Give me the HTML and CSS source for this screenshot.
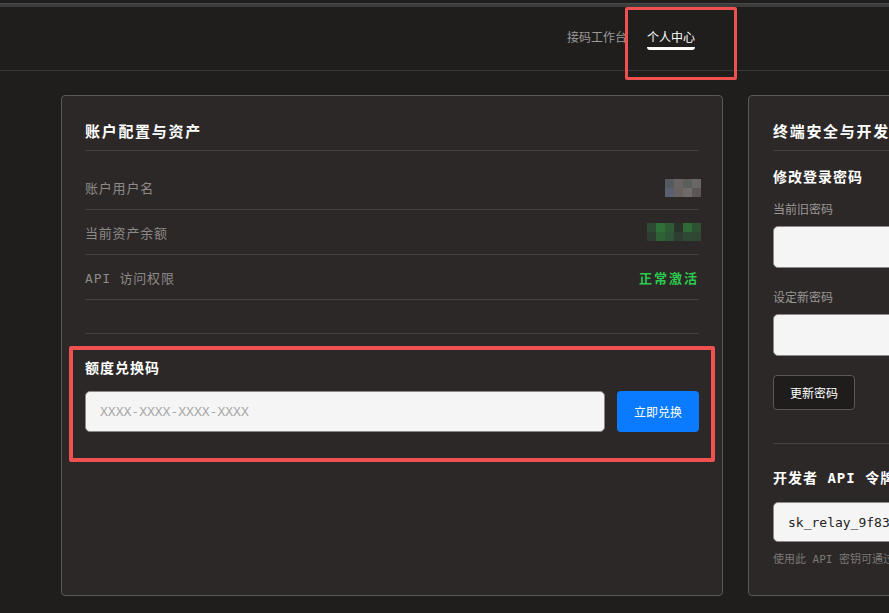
FILE: index.html
```html
<!DOCTYPE html>
<html lang="zh-CN">
<head>
<meta charset="utf-8">
<title>个人中心</title>
<link rel="stylesheet" href="styles.css">
</head>
<body>
<div class="topstrip"></div>
<header class="header">
  <nav class="nav">
    <a class="nav-item">接码工作台</a>
    <a class="nav-item active">个人中心</a>
  </nav>
</header>

<main class="grid">
  <section class="card">
    <h2 class="card-title">账户配置与资产</h2>
    <div class="rows">
      <div class="row">
        <span class="label">账户用户名</span>
        <span class="pix pix-4">
          <i style="background:#555a60"></i><i style="background:#6a6263"></i><i style="background:#5a5e5c"></i><i style="background:#6a6664"></i>
          <i style="background:#5a6070"></i><i style="background:#67615f"></i><i style="background:#6e6a68"></i><i style="background:#5e5654"></i>
        </span>
      </div>
      <div class="row">
        <span class="label">当前资产余额</span>
        <span class="pix pix-6">
          <i style="background:#2f4a33"></i><i style="background:#2e7038"></i><i style="background:#2f5c35"></i><i style="background:#2a322c"></i><i style="background:#2f6a37"></i><i style="background:#2e5034"></i>
          <i style="background:#2d3d30"></i><i style="background:#2e6236"></i><i style="background:#2e5535"></i><i style="background:#2d3e32"></i><i style="background:#2e4a35"></i><i style="background:#2e4833"></i>
        </span>
      </div>
      <div class="row">
        <span class="label">API 访问权限</span>
        <span class="status">正常激活</span>
      </div>
    </div>
    <hr class="sep sep-left">
    <div class="redeem">
      <h3 class="sub-title">额度兑换码</h3>
      <div class="redeem-form">
        <input class="field field-code" type="text" placeholder="XXXX-XXXX-XXXX-XXXX">
        <button class="btn-primary" type="button">立即兑换</button>
      </div>
    </div>
  </section>

  <section class="card">
    <h2 class="card-title">终端安全与开发</h2>
    <h3 class="sub-title sub-first">修改登录密码</h3>
    <label class="field-label">当前旧密码</label>
    <input class="field field-pass" type="password">
    <label class="field-label field-label-2">设定新密码</label>
    <input class="field field-pass" type="password">
    <button class="btn-dark" type="button">更新密码</button>
    <hr class="sep sep-right">
    <h3 class="sub-title">开发者 API 令牌</h3>
    <input class="field field-token" type="text" value="sk_relay_9f83a1c7e2b04d5f8a6e" readonly>
    <p class="help">使用此 API 密钥可通过接口调用接码服务，请妥善保管。</p>
  </section>
</main>

<div class="annot annot-nav"></div>
<div class="annot annot-redeem"></div>
</body>
</html>
```

FILE: styles.css
```css
html, body {
  margin: 0;
  padding: 0;
  overflow: hidden;
}

body {
  background: #1f1e1d;
  color: #eeeeee;
  font-family: "DejaVu Sans Mono", "Noto Sans CJK SC", monospace;
  height: 613px;
  position: relative;
}

.topstrip {
  height: 4px;
  margin-top: 3px;
  background: #3c3c3c;
  border-top: 1px solid #4a4a4a;
  box-sizing: border-box;
}

.header {
  height: 63px;
  border-bottom: 1px solid #3a3a3a;
  box-sizing: content-box;
  display: flex;
  justify-content: flex-end;
  padding-right: 194px;
}

.nav {
  display: flex;
  gap: 20px;
  padding-top: 22px;
}

.nav-item {
  font-family: "Noto Sans CJK SC", sans-serif;
  font-size: 12px;
  line-height: 16px;
  color: #9a9a9a;
  text-decoration: none;
}

.nav-item.active {
  color: #ffffff;
}

.nav-item.active::after {
  content: "";
  display: block;
  height: 3px;
  margin-top: 2px;
  background: #ffffff;
  border-radius: 0 0 3px 3px;
}

.grid {
  display: grid;
  grid-template-columns: 662px 662px;
  gap: 25px;
  padding: 24px 0 0 61px;
}

.card {
  background: #2c2827;
  border: 1px solid #5b5857;
  border-radius: 4px;
  padding: 24px 23px 27px;
  box-sizing: border-box;
}

.card + .card {
  padding-left: 24px;
}

.card-title {
  margin: 0;
  font-family: "Noto Sans CJK SC", sans-serif;
  font-size: 15px;
  font-weight: 700;
  letter-spacing: 1.7px;
  line-height: 22px;
  color: #ffffff;
  padding-bottom: 8px;
  border-bottom: 1px solid #46413f;
}

.rows {
  margin-top: 15px;
}

.row {
  height: 44px;
  border-bottom: 1px solid #46413f;
  display: flex;
  align-items: center;
  justify-content: space-between;
}

.row:first-child {
  height: 43px;
}

.label {
  font-size: 13px;
  letter-spacing: 0.8px;
  color: #8c8a89;
}

.pix {
  display: grid;
  grid-auto-rows: 9px;
  margin-right: -2px;
}

.pix-4 { grid-template-columns: repeat(4, 9px); }
.pix-6 { grid-template-columns: repeat(6, 9px); }

.pix i {
  display: block;
}

.status {
  font-family: "Noto Sans CJK SC", sans-serif;
  font-size: 13px;
  font-weight: 700;
  letter-spacing: 2px;
  color: #2bc94e;
}

.sep {
  border: 0;
  border-top: 1px solid #46413f;
  margin: 0;
}

.sep-left {
  margin-top: 33px;
}

.sub-title {
  margin: 24px 0 0;
  font-family: "DejaVu Sans Mono", "Noto Sans CJK SC", monospace;
  font-size: 14px;
  font-weight: 700;
  letter-spacing: 1px;
  line-height: 20px;
  color: #ffffff;
}

.sub-first {
  margin-top: 16px;
}

.redeem-form {
  display: flex;
  gap: 12px;
  margin-top: 13px;
}

.field {
  box-sizing: border-box;
  background: #f5f5f5;
  border: 1px solid #8a8888;
  border-radius: 5px;
  font-family: "DejaVu Sans Mono", monospace;
  font-size: 13px;
  color: #333333;
  outline: none;
  display: block;
}

.field::placeholder {
  color: #a9a9a9;
}

.field-code {
  flex: 1;
  height: 41px;
  padding: 0 14px;
}

.btn-primary {
  width: 82px;
  height: 41px;
  border: 0;
  border-radius: 4px;
  background: #0a7bff;
  color: #ffffff;
  font-family: "Noto Sans CJK SC", sans-serif;
  font-size: 12px;
}

.field-label {
  display: block;
  margin-top: 13px;
  font-family: "Noto Sans CJK SC", sans-serif;
  font-size: 12px;
  line-height: 18px;
  color: #9a9897;
}

.field-label-2 {
  margin-top: 20px;
}

.field-pass {
  width: 100%;
  height: 42px;
  margin-top: 8px;
}

.btn-dark {
  display: block;
  margin-top: 19px;
  width: 82px;
  height: 35px;
  background: #1e1d1c;
  border: 1px solid #5a5756;
  border-radius: 4px;
  color: #ffffff;
  font-family: "Noto Sans CJK SC", sans-serif;
  font-size: 12px;
}

.sep-right {
  margin-top: 33px;
}

.field-token {
  width: 100%;
  height: 40px;
  margin-top: 14px;
  padding: 0 14px;
  color: #222222;
}

.help {
  margin: 10px 0 0;
  font-size: 11px;
  line-height: 16px;
  color: #7a7877;
}

.annot {
  position: absolute;
  border-style: solid;
  border-color: #ef5050;
  border-radius: 2px;
  box-sizing: border-box;
  pointer-events: none;
}

.annot-nav {
  left: 625px;
  top: 7px;
  width: 112px;
  height: 73px;
  border-width: 3px;
}

.annot-redeem {
  left: 69px;
  top: 346px;
  width: 646px;
  height: 116px;
  border-width: 4px;
}
```
